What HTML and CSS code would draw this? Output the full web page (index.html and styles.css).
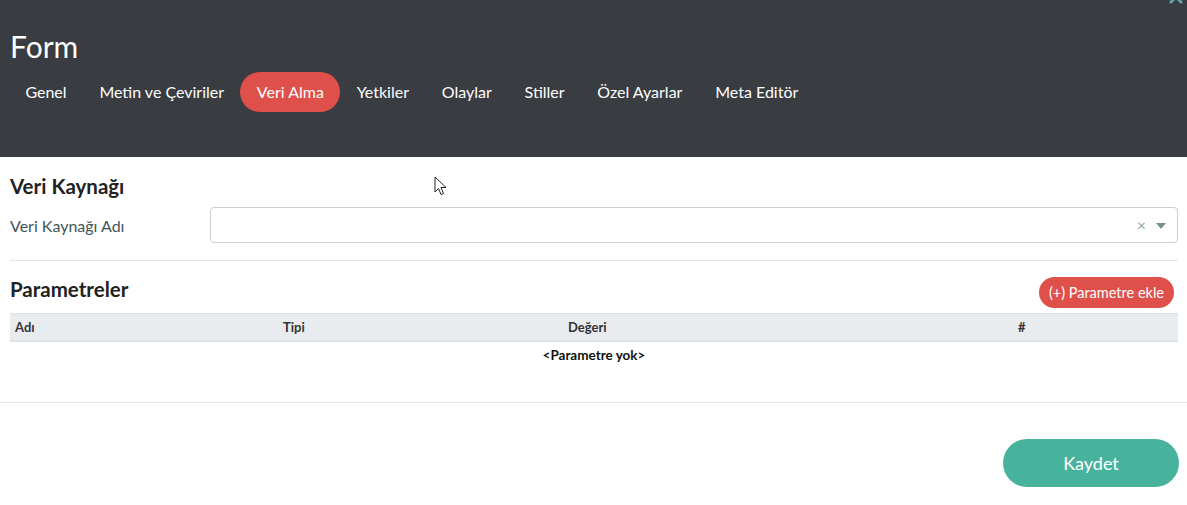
FILE: index.html
```html
<!DOCTYPE html>
<html lang="tr">
<head>
<meta charset="utf-8">
<title>Form</title>
<link rel="stylesheet" href="styles.css">
</head>
<body>
<div class="page">
  <header class="header">
    <svg class="close-icon" width="14" height="14" viewBox="0 0 14 14"><path d="M2 2 L12 12 M12 2 L2 12" stroke="#5fa3a6" stroke-width="3" stroke-linecap="round"/></svg>
    <h1 class="title">Form</h1>
    <nav class="tabs">
      <span class="tab">Genel</span>
      <span class="tab">Metin ve Çeviriler</span>
      <span class="tab active">Veri Alma</span>
      <span class="tab">Yetkiler</span>
      <span class="tab">Olaylar</span>
      <span class="tab">Stiller</span>
      <span class="tab">Özel Ayarlar</span>
      <span class="tab">Meta Editör</span>
    </nav>
  </header>
  <main class="content">
    <section class="section">
      <h2 class="section-title">Veri Kaynağı</h2>
      <div class="field">
        <label class="field-label">Veri Kaynağı Adı</label>
        <div class="select">
          <span class="select-clear">×</span>
          <span class="select-caret"></span>
        </div>
      </div>
    </section>
    <hr class="divider">
    <section class="section params">
      <div class="params-head">
        <h2 class="section-title">Parametreler</h2>
        <button class="btn-add">(+) Parametre ekle</button>
      </div>
      <table class="table">
        <thead>
          <tr><th class="c1">Adı</th><th class="c2">Tipi</th><th class="c3">Değeri</th><th class="c4">#</th></tr>
        </thead>
        <tbody>
          <tr><td colspan="4" class="empty">&lt;Parametre yok&gt;</td></tr>
        </tbody>
      </table>
    </section>
  </main>
  <hr class="divider full">
  <footer class="footer">
    <button class="btn-save">Kaydet</button>
  </footer>
  <svg class="cursor" width="14" height="20" viewBox="0 0 14 20"><path d="M1 1 L1 16 L4.5 12.5 L7 18.5 L9.5 17.5 L7 11.5 L12 11.5 Z" fill="#fff" stroke="#222" stroke-width="1" stroke-linejoin="round"/></svg>
</div>
</body>
</html>
```
FILE: styles.css
```css
* { box-sizing: border-box; }
html, body { margin: 0; padding: 0; background: #fff; }
body { font-family: "Lato", "Noto Sans", sans-serif; color: #222; }
.page { position: relative; width: 1187px; height: 505px; overflow: hidden; }

.header {
  position: relative;
  background: #393c41;
  height: 157px;
  padding: 27px 10px 0 10px;
}
.close-icon { position: absolute; right: 4px; top: -10px; }
.title {
  margin: 0;
  font-weight: 400;
  font-size: 30px;
  line-height: 38px;
  color: #fff;
}
.tabs { display: flex; margin-top: 7px; margin-left: -1px; }
.tab {
  display: inline-flex;
  align-items: center;
  height: 40px;
  padding: 0 16.4px 1px;
  border-radius: 20px;
  color: #fff;
  font-size: 16px;
}
.tab.active { background: #e0504a; }

.content { padding: 0 9px 0 10px; }
.section-title {
  margin: 0;
  font-size: 20.5px;
  font-weight: 700;
  color: #222;
  line-height: 24px;
}
.section { padding-top: 17px; }
.field { display: flex; align-items: center; margin-top: 9px; }
.field-label { width: 200px; font-size: 16px; color: #3f5557; }
.select {
  position: relative;
  flex: 1;
  height: 36px;
  border: 1px solid #cfcfcf;
  border-radius: 4px;
  background: #fff;
}
.select-clear {
  position: absolute;
  right: 31px;
  top: 8px;
  font-size: 16px;
  line-height: 18px;
  color: #9aa;
}
.select-caret {
  position: absolute;
  right: 11px;
  top: 15px;
  width: 0; height: 0;
  border-left: 5px solid transparent;
  border-right: 5px solid transparent;
  border-top: 6px solid #7a8e90;
}
.divider { border: 0; border-top: 1px solid #e6e6e6; margin: 17px 0 0 0; height: 0; }
.divider.full { margin: 33px 0 0 0; }

.params { padding-top: 16px; }
.params-head { display: flex; justify-content: space-between; align-items: flex-start; padding-right: 4px; }
.btn-add {
  height: 31px;
  padding: 0 10px;
  border: 0;
  border-radius: 16px;
  background: #e0504a;
  color: #fff;
  font-family: inherit;
  font-size: 14.5px;
}
.table { width: 100%; border-collapse: collapse; margin-top: 5px; }
.table th {
  background: #e9ecef;
  border-top: 1px solid #dee2e6;
  border-bottom: 2px solid #dee2e6;
  height: 27px;
  font-size: 13px;
  font-weight: 700;
  text-align: left;
  color: #333;
  padding: 0 5px;
}
.c1 { width: 268px; }
.c2 { width: 285px; }
.c3 { width: 450px; }
.empty { text-align: center; font-size: 13.5px; font-weight: 700; padding: 5px 0 6px; color: #111; line-height: 16px; }

.footer { display: flex; justify-content: flex-end; padding: 36px 8px 0 0; }
.btn-save {
  width: 176px;
  height: 48px;
  border: 0;
  border-radius: 24px;
  background: #48b39d;
  color: #fff;
  font-family: inherit;
  font-size: 18px;
}
.cursor { position: absolute; left: 434px; top: 176px; }
```
